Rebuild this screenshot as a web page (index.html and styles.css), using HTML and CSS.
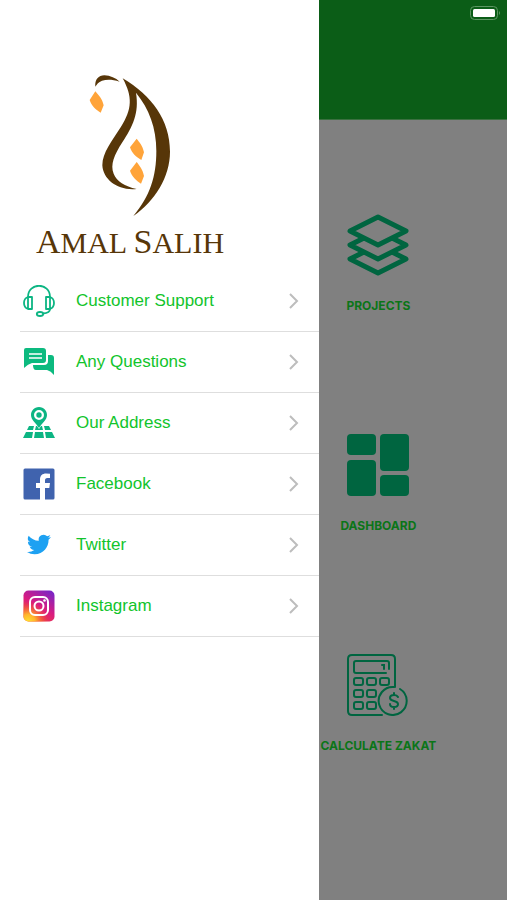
FILE: index.html
```html
<!DOCTYPE html>
<html lang="en">
<head>
  <meta charset="UTF-8" />
  <meta name="viewport" content="width=device-width, initial-scale=1.0"/>
  <title>Amal Salih</title>
  <link rel="stylesheet" href="styles.css">
</head>
<body>
  <div class="app">
    <!-- Side menu -->
    <aside class="drawer">
      <div class="brand">
        <svg class="brand-mark" viewBox="0 0 360 465" aria-hidden="true">
          <g fill="#573608">
            <path d="M76 65C74 43 86 31 103 31C121 32 137 39 149 50C127 43 110 43 96 47C85 51 81 57 76 65Z"/>
            <path d="M158 40C245 92 300 165 300 260C300 335 255 408 190 453C240 394 259 334 259 258C259 188 237 131 198 83C208 145 188 184 157 232C133 270 120 299 131 326C140 350 164 363 200 372C144 378 99 344 97 301C97 263 126 228 152 187C187 133 188 95 158 40Z"/>
          </g>
          <g fill="#ffa43a">
            <path d="M76 79L59 105C64 122 78 135 92 143L101 121C97 101 86 91 76 79Z"/>
            <path d="M200 221L180 247C185 264 199 277 214 285L222 262C218 241 208 232 200 221Z"/>
            <path d="M200 291L180 317C185 334 199 347 213 356L222 333C218 312 208 302 200 291Z"/>
          </g>
        </svg>
        <h1 class="brand-name"><span>A</span>MAL <span>S</span>ALIH</h1>
      </div>

      <nav class="menu">
        <a class="menu-item" href="#">
          <svg class="menu-icon" viewBox="0 0 32 32" fill="none" stroke="#0cb583" stroke-width="1.8" stroke-linejoin="round">
            <path d="M5 12C5 -3 27 -3 27 12"/>
            <path d="M5 12H9V24H5C2 23 1 21 1 18C1 15 2 13 5 12V24M27 12H23V24H27C30 23 31 21 31 18C31 15 30 13 27 12V24"/>
            <path d="M27 24Q27 28 20 28.500"/>
            <ellipse cx="17" cy="29" rx="3.200" ry="2"/>
          </svg>
          <span class="menu-label">Customer Support</span>
          <svg class="chevron" viewBox="0 0 10 16"><path d="M1 1L8 8L1 15"/></svg>
        </a>
        <a class="menu-item" href="#">
          <svg class="menu-icon" viewBox="0 0 32 32" fill="#0cba7f">
            <path d="M3 2H20Q23 2 23 5V14Q23 17 20 17H9Q5 18 1 22V4Q1 2 3 2Z"/>
            <path d="M25 9H28Q31 9 31 12V29Q28 25 24 24H13Q10 24 10 19H21Q25 19 25 15Z"/>
            <path d="M6 8H19M6 12H19" stroke="#fff" stroke-width="1.4"/>
          </svg>
          <span class="menu-label">Any Questions</span>
          <svg class="chevron" viewBox="0 0 10 16"><path d="M1 1L8 8L1 15"/></svg>
        </a>
        <a class="menu-item" href="#">
          <svg class="menu-icon" viewBox="0 0 32 32" fill="#0cb583">
            <path d="M6 19H11L10 23H4ZM13 19H14L16 22L18 19H19L20 23H12ZM21 19H26L28 23H22ZM3 25H10L9 31H0ZM12 25H20L21 31H11ZM22 25H29L32 31H23Z"/>
            <path fill-rule="evenodd" d="M16 0C11 0 8 4 8 8C8 13 13 16 16 21C19 16 24 13 24 8C24 4 21 0 16 0ZM16 3A5 5 0 1 1 16 13A5 5 0 1 1 16 3Z"/>
            <circle cx="16" cy="8" r="2.7"/>
          </svg>
          <span class="menu-label">Our Address</span>
          <svg class="chevron" viewBox="0 0 10 16"><path d="M1 1L8 8L1 15"/></svg>
        </a>
        <a class="menu-item" href="#">
          <svg class="menu-icon" viewBox="0 0 32 32">
            <rect x="0.5" y="0.5" width="31" height="31" rx="1.5" fill="#4063ae"/>
            <path fill="#fff" d="M17 32V20H13V15H17V11.500C17 7.500 19.500 5.500 23 5.500Q25 5.500 27 5.800V10H24.500C22.500 10 22 11 22 12.500V15H27L26.300 20H22V32Z"/>
          </svg>
          <span class="menu-label">Facebook</span>
          <svg class="chevron" viewBox="0 0 10 16"><path d="M1 1L8 8L1 15"/></svg>
        </a>
        <a class="menu-item" href="#">
          <svg class="menu-icon" viewBox="0 0 32 32">
            <path transform="translate(4 3.500)" fill="#1da1f2" d="M23.950 4.570a10 10 0 01-2.820.770 4.960 4.960 0 002.160-2.720c-.950.550-2 .950-3.120 1.180a4.920 4.920 0 00-8.380 4.480C7.690 8.090 4.070 6.130 1.640 3.160a4.920 4.920 0 001.520 6.570 4.900 4.900 0 01-2.230-.610v.060a4.920 4.920 0 003.950 4.830 5 5 0 01-2.210.080 4.940 4.940 0 004.600 3.420A9.870 9.870 0 010 19.540a14 14 0 007.550 2.210c9.050 0 14-7.500 14-13.980 0-.210 0-.420-.020-.630a9.940 9.940 0 002.420-2.570z"/>
          </svg>
          <span class="menu-label">Twitter</span>
          <svg class="chevron" viewBox="0 0 10 16"><path d="M1 1L8 8L1 15"/></svg>
        </a>
        <a class="menu-item" href="#">
          <svg class="menu-icon" viewBox="0 0 32 32">
            <defs>
              <linearGradient id="ig-base" x1="0.2" y1="1" x2="0.8" y2="0">
                <stop offset="0" stop-color="#f5482f"/>
                <stop offset="0.5" stop-color="#d91c80"/>
                <stop offset="1" stop-color="#7d24c4"/>
              </linearGradient>
              <radialGradient id="ig-glow" cx="0.15" cy="1" r="0.65">
                <stop offset="0" stop-color="#ffe02e"/>
                <stop offset="0.35" stop-color="#ffb52c"/>
                <stop offset="1" stop-color="#f5482f" stop-opacity="0"/>
              </radialGradient>
            </defs>
            <rect x="0.5" y="0.5" width="31" height="31" rx="5" fill="url(#ig-base)"/>
            <rect x="0.5" y="0.5" width="31" height="31" rx="5" fill="url(#ig-glow)"/>
            <g fill="none" stroke="#fff" stroke-width="2">
              <rect x="7" y="7" width="18" height="18" rx="5"/>
              <circle cx="16" cy="16" r="4.500"/>
            </g>
            <circle cx="21.500" cy="10.500" r="1.300" fill="#fff"/>
          </svg>
          <span class="menu-label">Instagram</span>
          <svg class="chevron" viewBox="0 0 10 16"><path d="M1 1L8 8L1 15"/></svg>
        </a>
      </nav>
    </aside>

    <!-- Home screen, dimmed while the menu is open -->
    <main class="home">
      <header class="topbar">
        <svg class="battery" viewBox="0 0 31 14" aria-hidden="true">
          <rect x="0.5" y="0.5" width="27" height="13" rx="4" fill="none" stroke="#5c9562"/>
          <rect x="3" y="3" width="22" height="8" rx="1.500" fill="#fff"/>
          <path d="M29 5Q31 7 29 9Z" fill="#5c9562"/>
        </svg>
      </header>
      <div class="tiles">
        <a class="tile" href="#">
          <svg class="tile-icon" viewBox="0 0 62 62" fill="none" stroke="#006540" stroke-width="5" stroke-linejoin="round">
            <path d="M31 3L59 17L31 31L3 17Z"/>
            <path d="M17 24L3 31L31 45L59 31L45 24"/>
            <path d="M17 38L3 45L31 59L59 45L45 38"/>
          </svg>
          <span>PROJECTS</span>
        </a>
        <a class="tile" href="#">
          <svg class="tile-icon" viewBox="0 0 62 62" fill="#006540">
            <rect x="0" y="0" width="29" height="21" rx="4"/>
            <rect x="33" y="0" width="29" height="37" rx="4"/>
            <rect x="0" y="26" width="29" height="36" rx="4"/>
            <rect x="33" y="41" width="29" height="21" rx="4"/>
          </svg>
          <span>DASHBOARD</span>
        </a>
        <a class="tile" href="#">
          <svg class="tile-icon" viewBox="0 0 62 62" fill="none" stroke="#006540" stroke-width="2" stroke-linecap="round">
            <path d="M35 61H5Q1 61 1 57V5Q1 1 5 1H44Q48 1 48 5V33"/>
            <path d="M39 19H9Q7 19 7 17V9Q7 7 9 7H40Q42 7 42 9V15M35 11H37V15"/>
            <rect x="7" y="24" width="9" height="7" rx="2"/>
            <rect x="20" y="24" width="9" height="7" rx="2"/>
            <rect x="33" y="24" width="9" height="7" rx="2"/>
            <rect x="7" y="36" width="9" height="7" rx="2"/>
            <rect x="20" y="36" width="9" height="7" rx="2"/>
            <rect x="7" y="48" width="9" height="7" rx="2"/>
            <rect x="20" y="48" width="9" height="7" rx="2"/>
            <path d="M53 35A14 14 0 1 1 47 33"/>
            <path d="M51 43Q50 41 47 41Q43 41 43 44Q43 46 47 47Q51 48 51 50Q51 53 47 53Q43 53 43 50M47 39V41M47 53V55"/>
          </svg>
          <span>CALCULATE ZAKAT</span>
        </a>
      </div>
    </main>
  </div>
</body>
</html>
```
FILE: styles.css
```css
body {
  font-family: "Liberation Sans", Arial, sans-serif;
  background-color: #808080;
  margin: 0;
}
a {
  text-decoration: none;
}
.app {
  display: flex;
  min-height: 100vh;
}

/* side menu */
.drawer {
  width: 63%;
  flex-shrink: 0;
  background-color: #fff;
}
.brand {
  display: flex;
  flex-direction: column;
  align-items: center;
  width: 260px;
  padding: 65px 0 6px;
}
.brand-mark {
  width: 120px;
  height: 155px;
}
.brand-name {
  margin: 0;
  font-family: "Liberation Serif", serif;
  font-size: 30px;
  font-weight: normal;
  line-height: 44px;
  color: #573608;
  white-space: nowrap;
}
.brand-name span {
  font-size: 34px;
}
.menu {
  margin-left: 20px;
}
.menu-item {
  display: flex;
  align-items: center;
  height: 60px;
  padding: 0 20px 0 3px;
  border-bottom: 1px solid #dedede;
  color: #12c42c;
  font-size: 17px;
}
.menu-icon {
  width: 32px;
  height: 32px;
}
.menu-label {
  flex: 1;
  margin-left: 21px;
}
.chevron {
  width: 10px;
  height: 16px;
  fill: none;
  stroke: #bdbdbd;
  stroke-width: 2;
}

/* home screen */
.home {
  flex: 1;
  min-width: 0;
  background-color: #808080;
}
.topbar {
  display: flex;
  justify-content: flex-end;
  height: 120px;
  box-sizing: border-box;
  padding: 6px 6px 0;
  background-color: #0b5d17;
  border-bottom: 1px solid #3b7040;
}
.battery {
  width: 31px;
  height: 14px;
}
.tiles {
  display: grid;
  grid-template-columns: 118px;
  grid-auto-rows: 220px;
  padding-top: 34px;
}
.tile {
  display: flex;
  flex-direction: column;
  align-items: center;
  justify-content: center;
  gap: 22px;
  color: #0b7518;
  font-family: Inter, sans-serif;
  font-size: 12px;
  font-weight: bold;
  line-height: 16px;
  white-space: nowrap;
}
.tile-icon {
  width: 62px;
  height: 62px;
}
```
